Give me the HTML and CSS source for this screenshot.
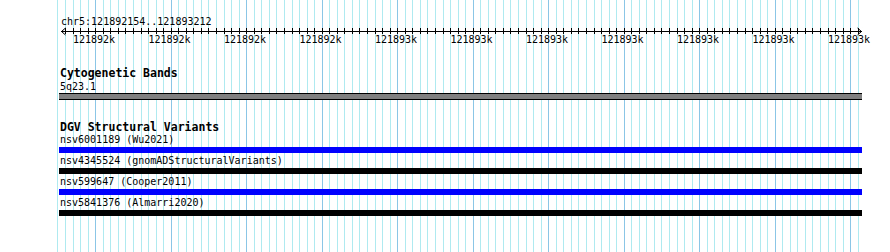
FILE: index.html
```html
<!DOCTYPE html>
<html>
<head>
<meta charset="utf-8">
<link rel="stylesheet" href="styles.css">
</head>
<body>
<div class="view">
  <svg class="grid" width="890" height="252" xmlns="http://www.w3.org/2000/svg"></svg>
  <div class="content">
    <div class="ruler">
      <div class="location">chr5:121892154..121893212</div>
      <svg class="scale" width="890" height="5" xmlns="http://www.w3.org/2000/svg">
        <g class="ticks"></g>
        <line class="axis" x1="61" y1="3.5" x2="862" y2="3.5"/>
        <polyline class="arrow" points="65.5,0 61.5,3.5 65.5,7"/>
        <polyline class="arrow" points="857.5,0 861.5,3.5 857.5,7"/>
      </svg>
      <div class="labels">
        <span>121892k</span><span>121892k</span><span>121892k</span><span>121892k</span>
        <span>121893k</span><span>121893k</span><span>121893k</span><span>121893k</span>
        <span>121893k</span><span>121893k</span><span>121893k</span>
      </div>
    </div>

    <section class="track cyto">
      <h2 class="track-title">Cytogenetic Bands</h2>
      <div class="feature">
        <div class="feature-label">5q23.1</div>
        <div class="band"></div>
      </div>
    </section>

    <section class="track dgv">
      <h2 class="track-title">DGV Structural Variants</h2>
      <div class="feature">
        <div class="feature-label">nsv6001189 (Wu2021)</div>
        <div class="bar blue"></div>
      </div>
      <div class="feature">
        <div class="feature-label">nsv4345524 (gnomADStructuralVariants)</div>
        <div class="bar black"></div>
      </div>
      <div class="feature">
        <div class="feature-label">nsv599647 (Cooper2011)</div>
        <div class="bar blue"></div>
      </div>
      <div class="feature">
        <div class="feature-label">nsv5841376 (Almarri2020)</div>
        <div class="bar black"></div>
      </div>
    </section>
  </div>
</div>
<script src="script.js"></script>
</body>
</html>
```

FILE: styles.css
```css
html, body {
  margin: 0;
  padding: 0;
  background: #ffffff;
}

body {
  font-family: "DejaVu Sans Mono", "Liberation Mono", monospace;
  font-size: 10px;
  color: #000;
}

.view {
  position: relative;
  width: 890px;
  height: 252px;
  overflow: hidden;
}

.grid {
  position: absolute;
  left: 0;
  top: 0;
  z-index: 0;
}

.grid .minor { stroke: #aeeaf0; stroke-width: 1; }
.grid .major { stroke: #8cc6e6; stroke-width: 1; }

.content {
  position: relative;
  z-index: 1;
}

.ruler {
  padding-top: 15px;
}

.location {
  padding-left: 61px;
  line-height: 13px;
  height: 13px;
}

.scale {
  display: block;
  overflow: visible;
}

.scale .axis, .scale .tick, .scale .arrow {
  stroke: #000;
  stroke-width: 1;
  fill: none;
}

.labels {
  display: flex;
  padding-left: 73px;
  line-height: 13px;
  height: 13px;
}

.labels span {
  flex: 0 0 75.5px;
  width: 75.5px;
}

.track-title {
  margin: 0;
  padding-left: 60px;
  font-size: 11.5px;
  font-weight: bold;
  line-height: 11px;
  height: 11px;
}

.cyto {
  margin-top: 22px;
}

.dgv {
  margin-top: 22px;
}

.cyto .feature-label {
  margin-top: 1px;
}

.feature-label {
  padding-left: 60px;
  line-height: 13px;
  height: 13px;
  white-space: nowrap;
}

.band {
  margin-left: 59px;
  width: 803px;
  height: 5px;
  background: #808080;
  border-top: 1px solid #000;
  border-bottom: 1px solid #000;
}

.feature {
  display: flex;
  flex-direction: column;
}

.dgv .feature-label {
  height: 13px;
}

.bar {
  margin: 1px 0 1px 59px;
  width: 803px;
  height: 6px;
}

.bar.blue { background: #0000ff; }
.bar.black { background: #000000; }
```

FILE: script.js
```js
(function () {
  var NS = "http://www.w3.org/2000/svg";
  var grid = document.querySelector(".grid");
  var ticks = document.querySelector(".scale .ticks");
  for (var i = 0; i <= 106; i++) {
    var x = Math.floor(57.95 + 7.55 * i) + 0.5;
    var l = document.createElementNS(NS, "line");
    l.setAttribute("x1", x);
    l.setAttribute("x2", x);
    l.setAttribute("y1", 0);
    l.setAttribute("y2", 252);
    l.setAttribute("class", i % 10 === 5 ? "major" : "minor");
    grid.appendChild(l);
    if (x > 62 && x < 860) {
      var t = document.createElementNS(NS, "line");
      t.setAttribute("x1", x);
      t.setAttribute("x2", x);
      t.setAttribute("y1", 0);
      t.setAttribute("y2", 6);
      t.setAttribute("class", "tick");
      ticks.appendChild(t);
    }
  }
})();
```
